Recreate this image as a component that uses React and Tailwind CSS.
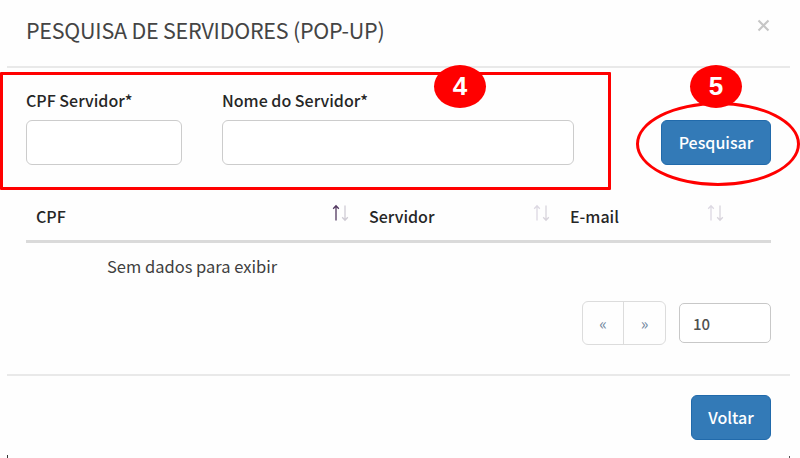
function SortArrows({ up = '#dcd8e2', down = '#d8d4dc' }) {
  return (
    <svg className="mt-[2px] h-[18px] w-[18px] shrink-0" viewBox="0 0 18 18" fill="none">
      <path d="M5 2.5V16.5M2.2 4.8L5 1.8L7.8 4.8" stroke={up} strokeWidth="1.3" />
      <path d="M14 1.5V15.5M11.2 13.2L14 16.2L16.8 13.2" stroke={down} strokeWidth="1.3" />
    </svg>
  );
}

function Callout({ className, children }) {
  return (
    <div
      className={`absolute top-[65px] flex h-[43px] w-[52px] items-center justify-center rounded-[50%] bg-[#ff0000] pb-[2px] font-['Liberation_Sans',sans-serif] text-[26px] leading-none font-bold text-white ${className}`}
    >
      {children}
    </div>
  );
}

export default function App() {
  return (
    <div className="relative flex h-[458px] w-[800px] flex-col overflow-hidden bg-[#fefefe] font-['Noto_Sans_CJK_SC','Noto_Sans',sans-serif] text-[#262626]">
      <header className="mr-[10px] ml-[7px] flex h-[68px] shrink-0 justify-between border-b-2 border-[#e9e9e9] pr-[20px] pl-[19px]">
        <h1 className="mt-[14px] text-[21.5px] leading-[32px] font-normal tracking-[-0.24px] whitespace-nowrap text-[#444]">
          PESQUISA DE SERVIDORES (POP-UP)
        </h1>
        <button aria-label="Fechar" className="mt-[19px] flex h-[13px] w-[13px]">
          <svg className="h-[13px] w-[13px]" viewBox="0 0 13 13">
            <path d="M1.5 1.5L11.5 11.5M11.5 1.5L1.5 11.5" stroke="#c6c6c6" strokeWidth="2.1" />
          </svg>
        </button>
      </header>

      <main className="mr-[29px] ml-[26px] flex h-[306px] shrink-0 flex-col">
        <form className="flex h-[97px] items-start">
          <label className="mt-[18px] mr-[40px] flex w-[156px] flex-col">
            <span className="h-[34px] text-[16px] leading-[28px] font-medium whitespace-nowrap">CPF Servidor*</span>
            <input className="h-[45px] w-full rounded-[6px] border-[1.5px] border-[#ccc] bg-white px-3" />
          </label>
          <label className="mt-[18px] flex w-[352px] flex-col">
            <span className="h-[34px] text-[16px] leading-[28px] font-medium whitespace-nowrap">Nome do Servidor*</span>
            <input className="h-[45px] w-full rounded-[6px] border-[1.5px] border-[#ccc] bg-white px-3" />
          </label>
          <button
            type="button"
            className="mt-[52px] ml-auto h-[45px] w-[110px] rounded-[6px] border-[1.5px] border-[#216aab] bg-[#337ab7] pb-[2px] text-[16px] leading-none font-medium text-white"
          >
            Pesquisar
          </button>
        </form>

        <div className="mt-[24px] flex h-[54px] shrink-0 border-b-[3px] border-[#dadada] text-[16px] leading-[28px] font-medium">
          <div className="flex w-[333px] justify-between pt-[13px] pr-[10px] pl-[10px]">
            <span>CPF</span>
            <SortArrows up="#51375f" down="#cfcbd4" />
          </div>
          <div className="flex w-[201px] justify-between pt-[13px] pr-[10px] pl-[10px]">
            <span>Servidor</span>
            <SortArrows />
          </div>
          <div className="flex w-[174px] justify-between pt-[13px] pr-[10px] pl-[10px]">
            <span>E-mail</span>
            <SortArrows />
          </div>
        </div>

        <p className="mt-[9px] h-[49px] pl-[81px] text-[16.5px] leading-[28px] whitespace-nowrap text-[#404040]">
          Sem dados para exibir
        </p>

        <div className="flex items-center justify-end gap-[13px]">
          <nav className="flex h-[44px] w-[84px] rounded-[6px] border-[1.5px] border-[#dcdcdc] text-[16px] text-[#7389a0]">
            <button className="flex w-[41px] items-center justify-center border-r-[1.5px] border-[#dcdcdc]">«</button>
            <button className="flex flex-1 items-center justify-center">»</button>
          </nav>
          <div className="flex h-[40px] w-[92px] items-center rounded-[5px] border-[1.5px] border-[#c8c8c8] bg-white pt-px pl-[13px] text-[15px] leading-none font-medium text-[#505050]">
            10
          </div>
        </div>
      </main>

      <footer className="mr-[10px] ml-[7px] flex h-[84px] shrink-0 items-start justify-end border-t-2 border-[#e9e9e9] pt-[19px] pr-[19px]">
        <button className="h-[45px] w-[80px] rounded-[6px] border-[1.5px] border-[#216aab] bg-[#337ab7] pb-[2px] text-[16px] leading-none font-medium text-white">
          Voltar
        </button>
      </footer>

      <div className="pointer-events-none absolute top-[72px] left-0 h-[118px] w-[611px] rounded-[1px] border-[3px] border-[#ff0000]" />
      <div className="pointer-events-none absolute top-[102px] left-[636px] h-[84px] w-[164px] rounded-[50%] border-[3px] border-[#ff0000]" />
      <Callout className="left-[434px]">4</Callout>
      <Callout className="left-[690px]">5</Callout>
      <div className="absolute bottom-0 left-[7px] h-[3px] w-px bg-[#333]" />
      <div className="absolute bottom-0 left-[789px] h-[2px] w-px bg-[#555]" />
    </div>
  );
}
